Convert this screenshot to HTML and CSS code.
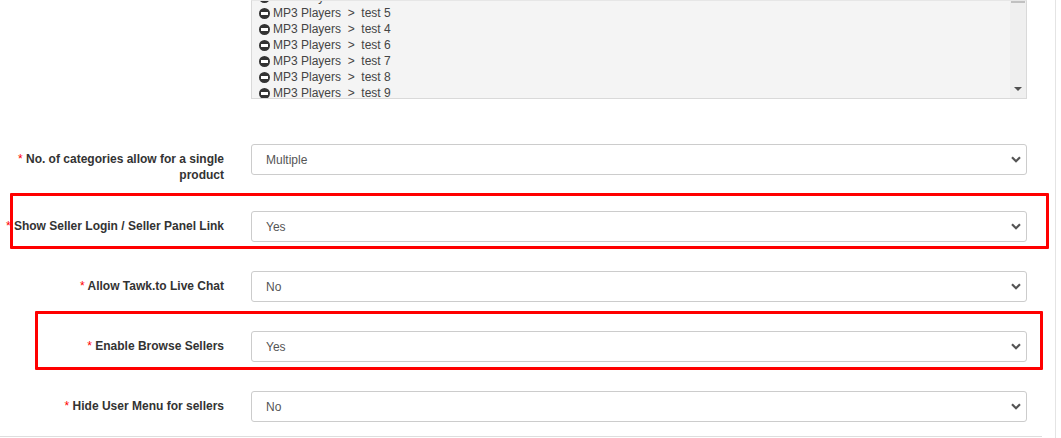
FILE: index.html
```html
<!DOCTYPE html>
<html lang="en">
<head>
    <meta charset="UTF-8">
    <meta name="viewport" content="width=device-width, initial-scale=1.0">
    <title>Seller Settings</title>
    <link rel="stylesheet" href="styles.css">
</head>
<body>
    <div class="page">
        <div class="panel">
            <div class="form-row row-list">
                <div class="control-label"></div>
                <div class="listbox">
                    <div class="list-items">
                        <div class="list-item"><span class="minus"></span>MP3 Players &nbsp;&gt;&nbsp; test 3</div>
                        <div class="list-item"><span class="minus"></span>MP3 Players &nbsp;&gt;&nbsp; test 5</div>
                        <div class="list-item"><span class="minus"></span>MP3 Players &nbsp;&gt;&nbsp; test 4</div>
                        <div class="list-item"><span class="minus"></span>MP3 Players &nbsp;&gt;&nbsp; test 6</div>
                        <div class="list-item"><span class="minus"></span>MP3 Players &nbsp;&gt;&nbsp; test 7</div>
                        <div class="list-item"><span class="minus"></span>MP3 Players &nbsp;&gt;&nbsp; test 8</div>
                        <div class="list-item"><span class="minus"></span>MP3 Players &nbsp;&gt;&nbsp; test 9</div>
                    </div>
                    <div class="scrollbar">
                        <div class="thumb"></div>
                        <div class="arrow-down"></div>
                    </div>
                </div>
            </div>

            <div class="form-row first">
                <label class="control-label"><span class="req">*</span> No. of categories allow for a single product</label>
                <div class="select-box">
                    <span>Multiple</span>
                    <svg class="chevron" width="10" height="7" viewBox="0 0 10 7"><path d="M1 1.2 L5 5.2 L9 1.2" fill="none" stroke="#555" stroke-width="2.2"/></svg>
                </div>
            </div>

            <div class="form-row">
                <label class="control-label"><span class="req">*</span> Show Seller Login / Seller Panel Link</label>
                <div class="select-box">
                    <span>Yes</span>
                    <svg class="chevron" width="10" height="7" viewBox="0 0 10 7"><path d="M1 1.2 L5 5.2 L9 1.2" fill="none" stroke="#555" stroke-width="2.2"/></svg>
                </div>
            </div>

            <div class="form-row">
                <label class="control-label"><span class="req">*</span> Allow Tawk.to Live Chat</label>
                <div class="select-box">
                    <span>No</span>
                    <svg class="chevron" width="10" height="7" viewBox="0 0 10 7"><path d="M1 1.2 L5 5.2 L9 1.2" fill="none" stroke="#555" stroke-width="2.2"/></svg>
                </div>
            </div>

            <div class="form-row">
                <label class="control-label"><span class="req">*</span> Enable Browse Sellers</label>
                <div class="select-box">
                    <span>Yes</span>
                    <svg class="chevron" width="10" height="7" viewBox="0 0 10 7"><path d="M1 1.2 L5 5.2 L9 1.2" fill="none" stroke="#555" stroke-width="2.2"/></svg>
                </div>
            </div>

            <div class="form-row last">
                <label class="control-label"><span class="req">*</span> Hide User Menu for sellers</label>
                <div class="select-box">
                    <span>No</span>
                    <svg class="chevron" width="10" height="7" viewBox="0 0 10 7"><path d="M1 1.2 L5 5.2 L9 1.2" fill="none" stroke="#555" stroke-width="2.2"/></svg>
                </div>
            </div>
        </div>

        <!-- annotation boxes drawn over the form -->
        <div class="mark mark-seller-link"></div>
        <div class="mark mark-browse"></div>
    </div>
</body>
</html>
```

FILE: styles.css
```css
* {
    box-sizing: border-box;
}

body {
    margin: 0;
    font-family: "Liberation Sans", Arial, sans-serif;
    font-size: 12px;
    color: #333;
    background-color: #fff;
}

.page {
    position: relative;
    width: 1056px;
    height: 438px;
    border-right: 1px solid #e4e4e4;
    overflow: hidden;
}

.panel {
    width: 1042px;
    padding-bottom: 14px;
    border-bottom: 1px solid #dedede;
}

.form-row {
    display: grid;
    grid-template-columns: 236px 776px;
    column-gap: 15px;
    align-items: start;
    margin-bottom: 29px;
}

.form-row.row-list {
    margin-bottom: 45px;
}

.form-row.first {
    margin-bottom: 28px;
}

.form-row.last {
    margin-bottom: 0;
}

.control-label {
    padding: 7px 12px 0 0;
    text-align: right;
    font-weight: bold;
    line-height: 16px;
    color: #333;
}

.req {
    color: #f00;
    font-weight: normal;
}

/* multi select list */
.listbox {
    position: relative;
    height: 99px;
    background-color: #f4f4f4;
    border: 1px solid #d9d9d9;
    border-top-color: #e6e6e6;
    overflow: hidden;
}

.list-items {
    margin-top: -12px;
    padding-left: 7px;
}

.list-item {
    display: flex;
    align-items: center;
    height: 16px;
    color: #444;
    white-space: nowrap;
}

.minus {
    position: relative;
    width: 11px;
    height: 11px;
    margin-right: 3px;
    border-radius: 50%;
    background-color: #333;
}

.minus::after {
    content: "";
    position: absolute;
    left: 2px;
    top: 4px;
    width: 7px;
    height: 3px;
    background-color: #fff;
}

.scrollbar {
    position: absolute;
    top: 0;
    right: 0;
    width: 16px;
    height: 100%;
    background-color: #efefef;
}

.thumb {
    margin: 0 1px;
    height: 2px;
    background-color: #c1c1c1;
}

.arrow-down {
    position: absolute;
    left: 4px;
    bottom: 7px;
    width: 0;
    height: 0;
    border-left: 4px solid transparent;
    border-right: 4px solid transparent;
    border-top: 4px solid #505050;
}

/* single selects */
.select-box {
    display: flex;
    align-items: center;
    justify-content: space-between;
    height: 31px;
    padding: 0 5px 0 14px;
    border: 1px solid #ccc;
    border-radius: 3px;
    background-color: #fff;
    color: #555;
}

.chevron {
    display: block;
}

/* red highlight annotations */
.mark {
    position: absolute;
    border: 3px solid #f00;
    border-radius: 1px;
}

.mark-seller-link {
    left: 10px;
    top: 193px;
    width: 1039px;
    height: 56px;
}

.mark-browse {
    left: 35px;
    top: 311px;
    width: 1008px;
    height: 59px;
}
```
